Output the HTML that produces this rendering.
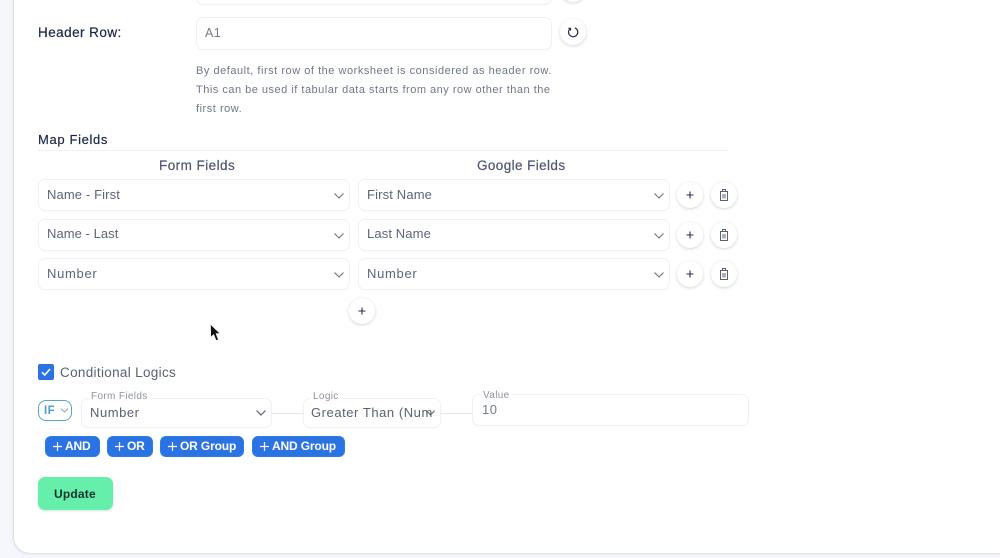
<!DOCTYPE html>
<html>
<head>
<meta charset="utf-8">
<style>
html,body{margin:0;padding:0;width:1000px;height:558px;overflow:hidden;background:#f5f7fd;font-family:"Liberation Sans",sans-serif;}
#w{position:absolute;left:0;top:0;width:1000px;height:558px;overflow:hidden;filter:blur(.3px);}
#card{position:absolute;left:14px;top:-30px;width:1000px;height:583px;background:#fff;border-radius:0 0 0 16px;box-shadow:-1px 1px 2px #d9dbe4;}
.t{position:absolute;white-space:nowrap;line-height:16px;}
.box{position:absolute;background:#fff;border:1px solid #f0f1f4;border-radius:7px;box-sizing:border-box;box-shadow:0 1px 1px rgba(30,40,80,.02);}
.lab{color:#5c6579;font-size:13px;}
.dark{color:#1b2746;font-size:13.5px;letter-spacing:.45px;-webkit-text-stroke:.2px #1b2746;}
.head{color:#4e5670;font-size:13.5px;-webkit-text-stroke:.2px #4e5670;}
.help{color:#6f7787;font-size:11px;letter-spacing:.53px;}
.circ{position:absolute;width:26px;height:26px;border-radius:50%;background:#fff;box-shadow:0 1px 3px rgba(30,40,70,.2);}
.circ svg,.box svg{position:absolute;}
.chev{position:absolute;}
.blue{position:absolute;top:436px;height:21px;background:#2b73e2;border:1px solid #2b80df;box-sizing:border-box;border-radius:6px;color:#fff;font-size:12px;font-weight:bold;line-height:19px;white-space:nowrap;}
.blue svg{position:absolute;left:6px;top:4px;}
.blue span{position:absolute;top:0;letter-spacing:-.15px;}
.leg{position:absolute;background:#fff;color:#8d93a1;font-size:10px;letter-spacing:.35px;line-height:12px;padding:0 2px;white-space:nowrap;}
.line{position:absolute;height:1px;background:#e6e8eb;}
</style>
</head>
<body>
<div id="w">
<div id="card"></div>

<!-- top clipped field -->
<div class="box" style="left:196px;top:-28px;width:356px;height:33px;"></div>
<div class="circ" style="left:560px;top:-24px;"></div>

<!-- Header row -->
<div class="t dark" style="left:38px;top:25px;">Header Row:</div>
<div class="box" style="left:196px;top:17px;width:356px;height:33px;"></div>
<div class="t" style="left:205px;top:25px;color:#757c8a;font-size:12.5px;letter-spacing:.4px;">A1</div>
<div class="circ" style="left:560px;top:19px;">
<svg style="left:7px;top:7px" width="12" height="12" viewBox="0 0 12 12" fill="none" stroke="#28304a" stroke-width="1.2"><path d="M3.2 2.6A4.6 4.6 0 1 0 8 1.9"/><path d="M1.4 2.2 3.5 2.4 3.5 4.6"/></svg>
</div>

<div class="t help" style="left:196px;top:63px;">By default, first row of the worksheet is considered as header row.</div>
<div class="t help" style="left:196px;top:82px;letter-spacing:.5px;">This can be used if tabular data starts from any row other than the</div>
<div class="t help" style="left:196px;top:101px;">first row.</div>

<!-- Map fields -->
<div class="t dark" style="left:38px;top:132px;font-size:13px;letter-spacing:.65px;">Map Fields</div>
<div class="line" style="left:38px;top:150px;width:690px;background:#f1f2f4;"></div>
<div class="t head" style="left:159px;top:158px;letter-spacing:.45px;">Form Fields</div>
<div class="t head" style="left:477px;top:158px;letter-spacing:.4px;">Google Fields</div>

<!-- Row 1 -->
<div class="box" style="left:38px;top:179px;width:312px;height:32px;"></div>
<div class="t lab" style="left:47px;top:187px;letter-spacing:.12px;">Name - First</div>
<svg class="chev" style="left:333px;top:192px" width="12" height="8" viewBox="0 0 12 8" fill="none" stroke="#6a7080" stroke-width="1.1"><path d="M1.5 1.5 6 6 10.5 1.5"/></svg>
<div class="box" style="left:358px;top:179px;width:312px;height:32px;"></div>
<div class="t lab" style="left:367px;top:187px;letter-spacing:.15px;">First Name</div>
<svg class="chev" style="left:653px;top:192px" width="12" height="8" viewBox="0 0 12 8" fill="none" stroke="#6a7080" stroke-width="1.1"><path d="M1.5 1.5 6 6 10.5 1.5"/></svg>
<div class="circ" style="left:677px;top:182px;"><svg style="left:8px;top:8px" width="10" height="10" viewBox="0 0 10 10" stroke="#28304a" stroke-width="1.1"><path d="M5 1.5V8.5M1.5 5H8.5"/></svg></div>
<div class="circ" style="left:711px;top:182px;"><svg style="left:7px;top:6px" width="12" height="14" viewBox="0 0 12 14" fill="none" stroke="#5a6072" stroke-width="1"><path d="M2.5 3.5H9.5V12.5H2.5ZM2 3.5H10M4.5 3.5V1.5H7.5V3.5M5 6V10.5M7 6V10.5"/></svg></div>

<!-- Row 2 -->
<div class="box" style="left:38px;top:219px;width:312px;height:32px;"></div>
<div class="t lab" style="left:47px;top:226px;letter-spacing:.05px;">Name - Last</div>
<svg class="chev" style="left:333px;top:232px" width="12" height="8" viewBox="0 0 12 8" fill="none" stroke="#6a7080" stroke-width="1.1"><path d="M1.5 1.5 6 6 10.5 1.5"/></svg>
<div class="box" style="left:358px;top:219px;width:312px;height:32px;"></div>
<div class="t lab" style="left:367px;top:226px;letter-spacing:.12px;">Last Name</div>
<svg class="chev" style="left:653px;top:232px" width="12" height="8" viewBox="0 0 12 8" fill="none" stroke="#6a7080" stroke-width="1.1"><path d="M1.5 1.5 6 6 10.5 1.5"/></svg>
<div class="circ" style="left:677px;top:222px;"><svg style="left:8px;top:8px" width="10" height="10" viewBox="0 0 10 10" stroke="#28304a" stroke-width="1.1"><path d="M5 1.5V8.5M1.5 5H8.5"/></svg></div>
<div class="circ" style="left:711px;top:222px;"><svg style="left:7px;top:6px" width="12" height="14" viewBox="0 0 12 14" fill="none" stroke="#5a6072" stroke-width="1"><path d="M2.5 3.5H9.5V12.5H2.5ZM2 3.5H10M4.5 3.5V1.5H7.5V3.5M5 6V10.5M7 6V10.5"/></svg></div>

<!-- Row 3 -->
<div class="box" style="left:38px;top:258px;width:312px;height:32px;"></div>
<div class="t lab" style="left:47px;top:266px;letter-spacing:.7px;">Number</div>
<svg class="chev" style="left:333px;top:271px" width="12" height="8" viewBox="0 0 12 8" fill="none" stroke="#6a7080" stroke-width="1.1"><path d="M1.5 1.5 6 6 10.5 1.5"/></svg>
<div class="box" style="left:358px;top:258px;width:312px;height:32px;"></div>
<div class="t lab" style="left:367px;top:266px;letter-spacing:.7px;">Number</div>
<svg class="chev" style="left:653px;top:271px" width="12" height="8" viewBox="0 0 12 8" fill="none" stroke="#6a7080" stroke-width="1.1"><path d="M1.5 1.5 6 6 10.5 1.5"/></svg>
<div class="circ" style="left:677px;top:261px;"><svg style="left:8px;top:8px" width="10" height="10" viewBox="0 0 10 10" stroke="#28304a" stroke-width="1.1"><path d="M5 1.5V8.5M1.5 5H8.5"/></svg></div>
<div class="circ" style="left:711px;top:261px;"><svg style="left:7px;top:6px" width="12" height="14" viewBox="0 0 12 14" fill="none" stroke="#5a6072" stroke-width="1"><path d="M2.5 3.5H9.5V12.5H2.5ZM2 3.5H10M4.5 3.5V1.5H7.5V3.5M5 6V10.5M7 6V10.5"/></svg></div>

<div class="circ" style="left:349px;top:298px;"><svg style="left:8px;top:8px" width="10" height="10" viewBox="0 0 10 10" stroke="#28304a" stroke-width="1.1"><path d="M5 1.5V8.5M1.5 5H8.5"/></svg></div>

<!-- cursor -->
<svg style="position:absolute;left:209px;top:323px" width="13" height="19" viewBox="0 0 13 19"><path d="M1.5 1.5 1.8 14 4.7 11.4 7.2 17.5 9.3 16.6 6.9 10.6 10.8 10.4Z" fill="#111" stroke="#fff" stroke-width=".5"/></svg>

<!-- Conditional logics -->
<div style="position:absolute;left:38px;top:364px;width:16px;height:16px;border-radius:2px;background:#2b73e2;">
<svg style="position:absolute;left:2px;top:2px" width="12" height="12" viewBox="0 0 12 12" fill="none" stroke="#fff" stroke-width="1.6"><path d="M2 6.3 4.8 9 10 3"/></svg>
</div>
<div class="t" style="left:60px;top:365px;color:#5a6273;font-size:13.5px;letter-spacing:.32px;">Conditional Logics</div>

<div style="position:absolute;left:38px;top:400px;width:34px;height:21px;box-sizing:border-box;border:1.5px solid #58a5c8;border-radius:8px;background:#fff;"></div>
<div class="t" style="left:44px;top:403px;color:#4a9fd0;font-size:11.5px;font-weight:bold;letter-spacing:.4px;">IF</div>
<svg class="chev" style="left:60px;top:407px" width="9" height="7" viewBox="0 0 9 7" fill="none" stroke="#9aa3b0" stroke-width="1"><path d="M1 1.5 4.5 5 8 1.5"/></svg>

<div class="line" style="left:272px;top:413px;width:31px;"></div>
<div class="line" style="left:441px;top:413px;width:31px;"></div>

<div class="box" style="left:81px;top:398px;width:191px;height:30px;"></div>
<div class="leg" style="left:89px;top:391px;">Form Fields</div>
<div class="t" style="left:90px;top:405px;color:#5a6273;font-size:13px;letter-spacing:.55px;">Number</div>
<svg class="chev" style="left:255px;top:409px" width="12" height="8" viewBox="0 0 12 8" fill="none" stroke="#5b6272" stroke-width="1.2"><path d="M1.5 1.5 6 6 10.5 1.5"/></svg>

<div class="box" style="left:303px;top:398px;width:138px;height:30px;"></div>
<div class="leg" style="left:311px;top:391px;">Logic</div>
<div style="position:absolute;left:311px;top:405px;width:122px;overflow:hidden;white-space:nowrap;line-height:16px;color:#5a6273;font-size:13px;letter-spacing:.55px;">Greater Than (Number)</div>
<svg class="chev" style="left:425px;top:409px" width="11" height="8" viewBox="0 0 12 8" fill="none" stroke="#5b6272" stroke-width="1.2"><path d="M1.5 1.5 6 6 10.5 1.5"/></svg>

<div class="box" style="left:472px;top:394px;width:277px;height:32px;"></div>
<div class="leg" style="left:481px;top:390px;">Value</div>
<div class="t" style="left:482px;top:402px;color:#757c8a;font-size:13px;letter-spacing:.5px;">10</div>

<!-- blue buttons -->
<div class="blue" style="left:45px;width:55px;"><svg width="11" height="11" viewBox="0 0 11 11" stroke="#fff" stroke-width="1.2"><path d="M5.5 1V10M1 5.5H10"/></svg><span style="left:19px;">AND</span></div>
<div class="blue" style="left:107px;width:46px;"><svg width="11" height="11" viewBox="0 0 11 11" stroke="#fff" stroke-width="1.2"><path d="M5.5 1V10M1 5.5H10"/></svg><span style="left:19px;">OR</span></div>
<div class="blue" style="left:160px;width:84px;"><svg width="11" height="11" viewBox="0 0 11 11" stroke="#fff" stroke-width="1.2"><path d="M5.5 1V10M1 5.5H10"/></svg><span style="left:19px;">OR Group</span></div>
<div class="blue" style="left:252px;width:93px;"><svg width="11" height="11" viewBox="0 0 11 11" stroke="#fff" stroke-width="1.2"><path d="M5.5 1V10M1 5.5H10"/></svg><span style="left:19px;">AND Group</span></div>

<!-- update -->
<div style="position:absolute;left:38px;top:477px;width:75px;height:33px;background:#66eeab;border-radius:7px;box-shadow:0 1px 2px rgba(60,160,120,.25);"></div>
<div class="t" style="left:54px;top:486px;color:#123328;font-size:12px;font-weight:bold;letter-spacing:.2px;">Update</div>
</div>
</body>
</html>
